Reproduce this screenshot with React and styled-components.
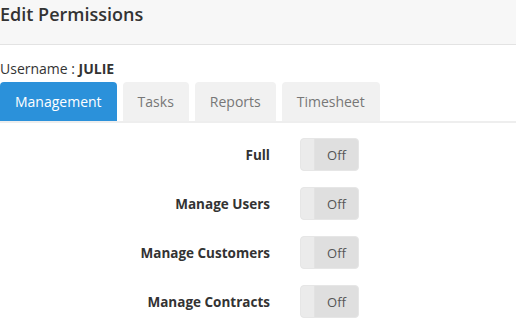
import React, { useState } from "react";
import styled, { createGlobalStyle } from "styled-components";

const GlobalStyle = createGlobalStyle`
	body {
		margin: 0;
		background: #fff;
		font-family: "Open Sans", "Liberation Sans", sans-serif;
		color: #333;
	}
`;

const tabs = ["Management", "Tasks", "Reports", "Timesheet"];
const permissions = ["Full", "Manage Users", "Manage Customers", "Manage Contracts"];

const App = () => {
	const [activeTab, setActiveTab] = useState("Management");
	const [values, setValues] = useState({});

	return (
		<Page>
			<GlobalStyle />
			<Header>
				<Title>Edit Permissions</Title>
			</Header>
			<Username>
				Username : <b>JULIE</b>
			</Username>
			<TabBar>
				{tabs.map((t) => (
					<Tab key={t} $active={activeTab === t} onClick={() => setActiveTab(t)}>
						{t}
					</Tab>
				))}
			</TabBar>
			<List>
				{permissions.map((p) => (
					<Row key={p}>
						<Label>{p}</Label>
						<Toggle
							$on={!!values[p]}
							onClick={() => setValues({ ...values, [p]: !values[p] })}
						>
							<Knob $on={!!values[p]} />
							<ToggleText>{values[p] ? "On" : "Off"}</ToggleText>
						</Toggle>
					</Row>
				))}
			</List>
		</Page>
	);
};

export default App;

const Page = styled.div`
	width: 516px;
	height: 324px;
	overflow: hidden;
`;

const Header = styled.header`
	height: 45px;
	background: #f7f7f7;
	border-bottom: 1px solid #e3e3e3;
	box-sizing: border-box;
	display: flex;
	align-items: center;
	padding-bottom: 16px;
`;

const Title = styled.h1`
	margin: 0;
	font-size: 18px;
	font-weight: 600;
	color: #333;
	line-height: 23px;
`;

const Username = styled.div`
	margin-top: 14px;
	font-size: 14px;
	line-height: 20px;
	color: #333;
	b {
		font-weight: 700;
	}
`;

const TabBar = styled.nav`
	display: flex;
	gap: 6px;
	margin-top: 3px;
	border-bottom: 2px solid #eeeeee;
`;

const Tab = styled.div`
	height: 39px;
	padding: 0 15px;
	display: flex;
	align-items: center;
	font-size: 14px;
	border-radius: 4px 4px 0 0;
	cursor: pointer;
	background: ${(p) => (p.$active ? "#2b91da" : "#f1f1f1")};
	color: ${(p) => (p.$active ? "#fff" : "#777")};
`;

const List = styled.div`
	display: flex;
	flex-direction: column;
	gap: 16px;
	padding-top: 15px;
`;

const Row = styled.div`
	display: grid;
	grid-template-columns: 270px 59px;
	column-gap: 30px;
	align-items: center;
`;

const Label = styled.div`
	text-align: right;
	font-size: 13.5px;
	font-weight: 700;
	color: #333;
`;

const Toggle = styled.div`
	position: relative;
	height: 33px;
	box-sizing: border-box;
	border: 1px solid #e6e6e6;
	border-radius: 4px;
	background: #dfdfdf;
	display: flex;
	align-items: center;
	cursor: pointer;
`;

const Knob = styled.span`
	width: 13px;
	align-self: stretch;
	background: #ebebeb;
	border-right: 1px solid #e2e2e2;
	border-radius: 3px 0 0 3px;
`;

const ToggleText = styled.span`
	flex: 1;
	text-align: center;
	font-size: 13px;
	color: #555;
`;
